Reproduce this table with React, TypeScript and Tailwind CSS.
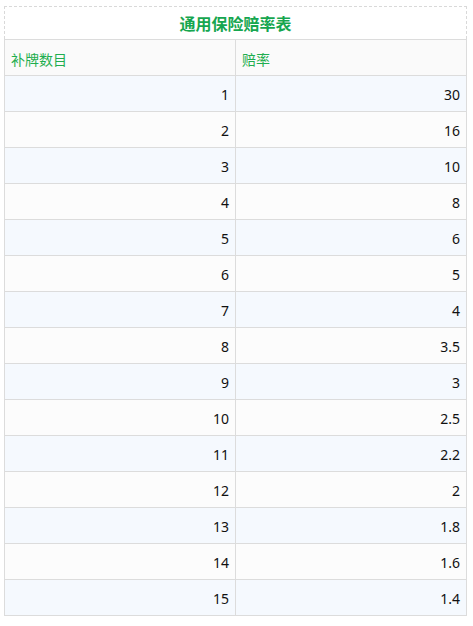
import React from "react";

const rows: [string, string][] = [
  ["1", "30"],
  ["2", "16"],
  ["3", "10"],
  ["4", "8"],
  ["5", "6"],
  ["6", "5"],
  ["7", "4"],
  ["8", "3.5"],
  ["9", "3"],
  ["10", "2.5"],
  ["11", "2.2"],
  ["12", "2"],
  ["13", "1.8"],
  ["14", "1.6"],
  ["15", "1.4"],
];

export default function App() {
  return (
    <div
      className="w-[473px] h-[626px] bg-white pt-[6px] pl-[4px]"
      style={{ fontFamily: '"Noto Sans", "Noto Sans CJK SC", sans-serif' }}
    >
      <div className="w-[463px]">
        <div className="h-[33px] border border-dashed border-b-0 border-[#d9d9d9] flex items-center justify-center">
          <span
            className="text-[16px] font-bold text-[#16a64f] leading-none"
            style={{ fontFamily: '"Noto Sans CJK SC", sans-serif' }}
          >
            通用保险赔率表
          </span>
        </div>
        <div className="border border-[#dcdcdc] border-b-0">
          <div className="grid grid-cols-[231px_1fr] h-[36px] bg-[#fafafa] border-b border-[#dcdcdc]">
            <div
              className="flex items-center pl-[6px] pt-[3px] text-[14px] text-[#1fae4f] border-r border-[#dcdcdc]"
              style={{ fontFamily: '"Noto Sans CJK SC", sans-serif' }}
            >
              补牌数目
            </div>
            <div
              className="flex items-center pl-[6px] pt-[3px] text-[14px] text-[#1fae4f]"
              style={{ fontFamily: '"Noto Sans CJK SC", sans-serif' }}
            >
              赔率
            </div>
          </div>
          {rows.map(([a, b], i) => (
            <div
              key={a}
              className={`grid grid-cols-[231px_1fr] h-[36px] border-b border-[#dcdcdc] ${
                i % 2 === 0 ? "bg-[#f5f9fe]" : "bg-[#fcfcfc]"
              }`}
            >
              <div className="flex items-center justify-end pr-[6px] pt-[2px] text-[14px] text-[#111111] border-r border-[#dcdcdc]">
                {a}
              </div>
              <div className="flex items-center justify-end pr-[6px] pt-[2px] text-[14px] text-[#111111]">
                {b}
              </div>
            </div>
          ))}
        </div>
      </div>
    </div>
  );
}
